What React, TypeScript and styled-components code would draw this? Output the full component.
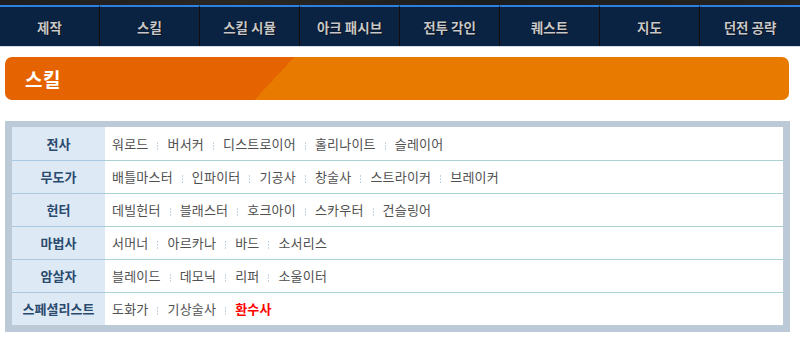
import React from "react";
import styled, { createGlobalStyle } from "styled-components";

const GlobalStyle = createGlobalStyle`
  body {
    margin: 0;
    background: #ffffff;
    font-family: "Noto Sans CJK KR", "Noto Sans", sans-serif;
  }
`;

const menu = ["제작", "스킬", "스킬 시뮬", "아크 패시브", "전투 각인", "퀘스트", "지도", "던전 공략"];

interface IClassRow {
  name: string;
  skills: { label: string; highlight?: boolean }[];
}

const classes: IClassRow[] = [
  { name: "전사", skills: [{ label: "워로드" }, { label: "버서커" }, { label: "디스트로이어" }, { label: "홀리나이트" }, { label: "슬레이어" }] },
  { name: "무도가", skills: [{ label: "배틀마스터" }, { label: "인파이터" }, { label: "기공사" }, { label: "창술사" }, { label: "스트라이커" }, { label: "브레이커" }] },
  { name: "헌터", skills: [{ label: "데빌헌터" }, { label: "블래스터" }, { label: "호크아이" }, { label: "스카우터" }, { label: "건슬링어" }] },
  { name: "마법사", skills: [{ label: "서머너" }, { label: "아르카나" }, { label: "바드" }, { label: "소서리스" }] },
  { name: "암살자", skills: [{ label: "블레이드" }, { label: "데모닉" }, { label: "리퍼" }, { label: "소울이터" }] },
  { name: "스페셜리스트", skills: [{ label: "도화가" }, { label: "기상술사" }, { label: "환수사", highlight: true }] },
];

export default function App() {
  return (
    <>
      <GlobalStyle />
      <Page>
        <TopStrip />
        <Nav>
          {menu.map((item) => (
            <NavItem key={item}>{item}</NavItem>
          ))}
        </Nav>
        <NavShadow />
        <TitleBar>
          <Title>스킬</Title>
        </TitleBar>
        <Frame>
          <ClassTable>
            <tbody>
              {classes.map((row, i) => (
                <Row key={row.name} $last={i === classes.length - 1}>
                  <ClassName>{row.name}</ClassName>
                  <Skills>
                    {row.skills.map((skill, j) => (
                      <React.Fragment key={skill.label}>
                        {j > 0 && <Divider />}
                        <Skill $highlight={skill.highlight}>{skill.label}</Skill>
                      </React.Fragment>
                    ))}
                  </Skills>
                </Row>
              ))}
            </tbody>
          </ClassTable>
        </Frame>
      </Page>
    </>
  );
}

const Page = styled.div`
  width: 800px;
  display: flex;
  flex-direction: column;
`;

const TopStrip = styled.div`
  height: 5px;
  background: linear-gradient(90deg, #1d1d1f 0%, #2a2622 30%, #1a1c1e 60%, #262320 100%);
`;

const Nav = styled.nav`
  display: flex;
  height: 41px;
  background: #0b2343;
`;

const NavItem = styled.div`
  width: 99px;
  height: 39px;
  border-top: 2px solid #2f7fe0;
  border-right: 1px solid #140c0c;
  display: flex;
  align-items: center;
  justify-content: center;
  color: #c6c8cb;
  font-size: 13.5px;
  font-weight: 700;
  text-shadow: 0 0 1px #000, 1px 1px 0 #0a1628;
  &:last-child {
    border-right: none;
    width: 100px;
  }
`;

const NavShadow = styled.div`
  height: 1px;
  background: #d6dce3;
`;

const TitleBar = styled.div`
  margin: 10px 11px 0 5px;
  height: 43px;
  border-radius: 7px;
  background: linear-gradient(132.9deg, #e56300 212px, #e87a00 212px);
  display: flex;
  align-items: center;
  padding-left: 20px;
`;

const Title = styled.h2`
  margin: 0;
  color: #ffffff;
  font-size: 19px;
  font-weight: 700;
  letter-spacing: 0.5px;
`;

const Frame = styled.div`
  margin: 21px 10px 0 5px;
  padding: 6px 7px 7px 7px;
  background: #bccad8;
`;

const ClassTable = styled.table`
  width: 100%;
  border-collapse: collapse;
  background: #ffffff;
`;

const Row = styled.tr<{ $last?: boolean }>`
  height: 33px;
  & > td {
    border-bottom: ${(p) => (p.$last ? "none" : "1px solid #a9d2cf")};
  }
  & > td:first-child {
    border-bottom-color: #a9c9e3;
  }
`;

const ClassName = styled.td`
  width: 93px;
  padding: 0;
  text-align: center;
  background: #dde9f5;
  color: #2a4a6e;
  font-size: 13px;
  font-weight: 700;
`;

const Skills = styled.td`
  padding: 0 0 0 7px;
  color: #505050;
  font-size: 13px;
  letter-spacing: 0.2px;
`;

const Skill = styled.span<{ $highlight?: boolean }>`
  color: ${(p) => (p.$highlight ? "#ff0000" : "#505050")};
  font-weight: ${(p) => (p.$highlight ? 700 : 400)};
`;

const Divider = styled.span`
  display: inline-block;
  width: 1px;
  height: 8px;
  margin: 0 9px;
  vertical-align: -1px;
  background: repeating-linear-gradient(180deg, #c3d3e2 0 2px, transparent 2px 3px);
`;
